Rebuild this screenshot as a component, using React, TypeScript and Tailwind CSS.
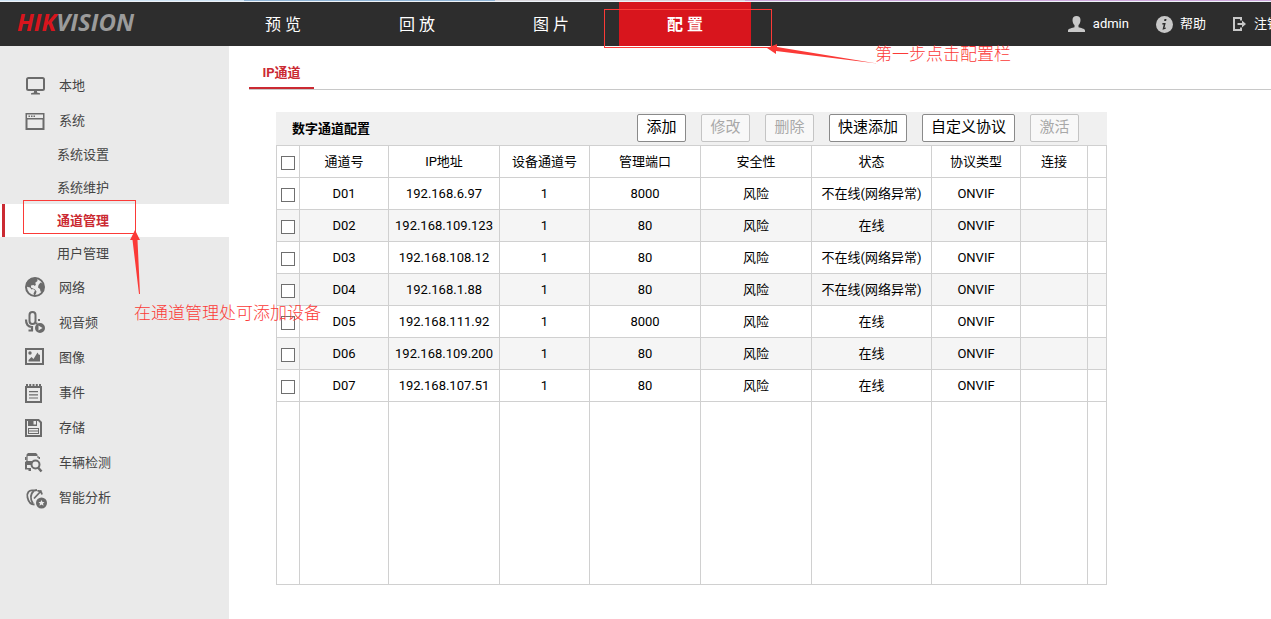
import type { ReactNode } from 'react';

type IconName =
  | 'monitor'
  | 'window'
  | 'globe'
  | 'mic'
  | 'image'
  | 'event'
  | 'storage'
  | 'vehicle'
  | 'smart';

interface MenuEntry {
  label: string;
  icon?: IconName;
  active?: boolean;
}

const MENU: MenuEntry[] = [
  { label: '本地', icon: 'monitor' },
  { label: '系统', icon: 'window' },
  { label: '系统设置' },
  { label: '系统维护' },
  { label: '通道管理', active: true },
  { label: '用户管理' },
  { label: '网络', icon: 'globe' },
  { label: '视音频', icon: 'mic' },
  { label: '图像', icon: 'image' },
  { label: '事件', icon: 'event' },
  { label: '存储', icon: 'storage' },
  { label: '车辆检测', icon: 'vehicle' },
  { label: '智能分析', icon: 'smart' },
];

const NAV = [
  { label: '预 览' },
  { label: '回 放' },
  { label: '图 片' },
  { label: '配 置', active: true },
];

const ACTIONS = [
  { label: '添加', enabled: true },
  { label: '修改', enabled: false },
  { label: '删除', enabled: false },
  { label: '快速添加', enabled: true },
  { label: '自定义协议', enabled: true },
  { label: '激活', enabled: false },
];

const COLUMNS = [
  { label: '通道号', width: 'w-[89px]' },
  { label: 'IP地址', width: 'w-[111px]' },
  { label: '设备通道号', width: 'w-[90px]' },
  { label: '管理端口', width: 'w-[111px]' },
  { label: '安全性', width: 'w-[111px]' },
  { label: '状态', width: 'w-[120px]' },
  { label: '协议类型', width: 'w-[89px]' },
  { label: '连接', width: 'w-[67px]' },
  { label: '', width: '' },
];

const OFFLINE = '不在线(网络异常)';

const CHANNELS = [
  { id: 'D01', ip: '192.168.6.97', port: '8000', state: OFFLINE },
  { id: 'D02', ip: '192.168.109.123', port: '80', state: '在线' },
  { id: 'D03', ip: '192.168.108.12', port: '80', state: OFFLINE },
  { id: 'D04', ip: '192.168.1.88', port: '80', state: OFFLINE },
  { id: 'D05', ip: '192.168.111.92', port: '8000', state: '在线' },
  { id: 'D06', ip: '192.168.109.200', port: '80', state: '在线' },
  { id: 'D07', ip: '192.168.107.51', port: '80', state: '在线' },
];

const ICONS: Record<IconName, ReactNode> = {
  monitor: (
    <>
      <rect x="3" y="4" width="17" height="12" rx="1.5" fill="none" stroke="currentColor" strokeWidth="2" />
      <path d="M10 16h3v2.5l3 .8V20.5H7V19.3l3-.8z" />
    </>
  ),
  window: (
    <>
      <path fillRule="evenodd" d="M1.5 4h19v17h-19zM3.500 10.500v8.500h15v-8.500zM3 5.500v3.500h16V5.500z" />
      <path d="M4.500 6.500H6V8H4.500zM7 6.500h1.500V8H7zM9.500 6.500H11V8H9.500z" />
    </>
  ),
  globe: (
    <>
      <circle cx="11" cy="11" r="9" fill="none" stroke="currentColor" strokeWidth="2" />
      <path d="M13 2C6 1 2 5 2 10.500l4 1 1.500 2 1.500-.5 2 1.500-1.500 3 1 2.500 1.500-2.500.5-2-1.500-2-4-2L7 9.500l2.500-.5L11 10l1-2-1-1 2.500-2zM14.500 9l2-2.500 3 1.500.5 4-1.500 4-2-.500-.5-2.500-2-1.500z" />
    </>
  ),
  mic: (
    <>
      <rect x="5.500" y="1" width="6" height="12" rx="3" fill="none" stroke="currentColor" strokeWidth="2" />
      <path d="M2 8.500c0 5 2 7.500 6 7.500M8 15v5M4.500 19.500H9" fill="none" stroke="currentColor" strokeWidth="2.200" />
      <path d="M14 8h2v2h-2zM11.500 11.500h2v2h-2z" />
      <path fillRule="evenodd" d="M16 12a5 5 0 1 1 0 10 5 5 0 0 1 0-10zM14.500 14.500v5l4-2.500z" />
    </>
  ),
  image: (
    <>
      <rect x="2" y="3" width="17" height="15" fill="none" stroke="currentColor" strokeWidth="2" />
      <circle cx="6" cy="7" r="1.700" />
      <path d="M4.500 15.500V14l3-3 2 2 4-6.500L15 9l1-.5v7z" />
    </>
  ),
  event: (
    <>
      <rect x="2" y="6" width="15" height="15" fill="none" stroke="currentColor" strokeWidth="2" />
      <path d="M2 3h2v3H2zM5.200 3h2v3h-2zM8.500 3h2v3h-2zM11.800 3h2v3h-2zM15 3h2v3h-2z" />
      <path d="M5 10h9v1.200H5zM5 13.200h9v1.200H5zM5 16.400h9v1.200H5z" />
    </>
  ),
  storage: (
    <>
      <path d="M2 4h12.500L17 6.500V20H2z" fill="none" stroke="currentColor" strokeWidth="2" />
      <path fillRule="evenodd" d="M4 4h9v6H4zM9.500 5v3.500H12V5z" />
      <rect x="4.500" y="12.500" width="10" height="5" fill="none" stroke="currentColor" />
      <path d="M5 14.500h9v1H5z" />
    </>
  ),
  vehicle: (
    <>
      <path d="M4 2h8l1.500 1.500V5H2.500V3.500zM1 6h1.500v3H1zM14.500 6H16v2h-1.500zM2.500 10h6v1.500H7V14H3v3h4v3H4.500v-1.500H1V11z" />
      <path d="M3 5v6M14 5v2" fill="none" stroke="currentColor" strokeWidth="1.200" />
      <circle cx="11.500" cy="13.500" r="4" fill="none" stroke="currentColor" strokeWidth="2" />
      <path d="M14 16.500l3.500 4" fill="none" stroke="currentColor" strokeWidth="2.500" />
    </>
  ),
  smart: (
    <>
      <path
        d="M9.500 4.500C5 3.500 2.500 7 3.500 11.500s2.500 7 7 7M10 4.500C6.500 8 6 13 9 17.500M10 12.500L17.500 4.500M8 5l5-1M13.500 5c2.500-.5 4 .5 4.500 3.500"
        fill="none"
        stroke="currentColor"
        strokeWidth="1.800"
      />
      <path
        fillRule="evenodd"
        d="M17.500 11.500a5.500 5.500 0 1 1 0 11 5.500 5.500 0 0 1 0-11zM17.500 14l-1 2h-2l1.500 1.500-.5 2.200 2-1.200 2 1.200-.5-2.200 1.500-1.500h-2z"
      />
    </>
  ),
};

function MenuIcon({ name }: { name: IconName }) {
  return (
    <svg viewBox="0 0 24 23" className="h-[23px] w-6 shrink-0 text-[#6b6b6b]" fill="currentColor" aria-hidden>
      {ICONS[name]}
    </svg>
  );
}

function Header() {
  return (
    <header className="flex h-11 shrink-0 items-stretch overflow-hidden bg-[#2d2d2d] text-white">
      <a
        href="#"
        className="flex w-[217px] shrink-0 items-center pb-1 pl-[17px] font-['Open_Sans'] text-[24px] leading-8 font-bold text-[#9b9b9b] italic"
      >
        <span className="text-[#d8151d]">HIK</span>VISION
      </a>

      <nav className="flex shrink-0 gap-0.5">
        {NAV.map((item) => (
          <a
            key={item.label}
            href="#"
            className={
              item.active
                ? 'flex w-[132px] items-center justify-center bg-[#d8151d] pt-0.5 text-base font-bold'
                : 'flex w-[132px] items-center justify-center pt-0.5 text-base'
            }
          >
            {item.label}
          </a>
        ))}
      </nav>

      <div className="-mr-[9px] ml-auto flex shrink-0 items-center gap-[27px] text-[13px]">
        <span className="flex items-center gap-2">
          <svg viewBox="0 0 17 16" className="h-4 w-[17px]" fill="#c8c8c8" aria-hidden>
            <path d="M8.500 0c2.500 0 4 1.500 4 4 0 2.200-.8 4.200-2 5v2.200c2 .8 6.500 1.300 6.500 3.300V16H0v-1.500c0-2 4.500-2.500 6.500-3.300V9c-1.200-.8-2-2.800-2-5 0-2.500 1.500-4 4-4z" />
          </svg>
          admin
        </span>
        <a href="#" className="flex items-center gap-[7px]">
          <svg viewBox="0 0 17 17" className="size-[17px]" aria-hidden>
            <circle cx="8.500" cy="8.500" r="8.500" fill="#c8c8c8" />
            <path d="M8.500 3h2l-.4 2h-2zM6.500 7h3.200l-1.200 5 1.500-.5-.3 1.200-3.200 1.100 1.200-5.300H6.200z" fill="#2d2d2d" />
          </svg>
          帮助
        </a>
        <a href="#" className="flex items-center gap-2">
          <svg viewBox="0 0 13 14" className="h-3.5 w-[13px]" aria-hidden>
            <path d="M8 3.500V1H1v12h7v-2.500" fill="none" stroke="#c8c8c8" strokeWidth="2" />
            <path d="M4.500 6H9V3.500L13 7l-4 3.500V8H4.500z" fill="#c8c8c8" />
          </svg>
          注销
        </a>
      </div>
    </header>
  );
}

function Sidebar() {
  return (
    <aside className="w-[229px] shrink-0 bg-[#eaeaea] pt-[22px] text-[13px] text-[#444]">
      <ul>
        {MENU.map((entry) => (
          <li key={entry.label}>
            {entry.icon ? (
              <a href="#" className="flex h-[35px] items-center gap-[11px] pl-6">
                <MenuIcon name={entry.icon} />
                {entry.label}
              </a>
            ) : (
              <a
                href="#"
                className={
                  entry.active
                    ? 'flex h-[33px] items-center bg-white pl-0.5 font-bold text-[#cb2a32]'
                    : 'flex h-[33px] items-center pl-[57px]'
                }
              >
                {entry.active && <span className="mr-[52px] h-full w-[3px] bg-[#cb2a32]" />}
                {entry.label}
              </a>
            )}
          </li>
        ))}
      </ul>
    </aside>
  );
}

function Tick({ label }: { label: string }) {
  return (
    <input
      type="checkbox"
      aria-label={label}
      className="mx-auto mt-[3px] block size-3.5 appearance-none border border-[#6f6f6f] bg-white"
    />
  );
}

function ChannelTable() {
  return (
    <table className="w-full table-fixed border-separate border-spacing-0 border-t border-l border-[#d0d0d0] text-center text-[13px] text-black [&_td]:border-r [&_td]:border-b [&_td]:border-[#d0d0d0] [&_td]:p-0 [&_th]:border-r [&_th]:border-b [&_th]:border-[#d0d0d0] [&_th]:p-0">
      <thead>
        <tr className="h-8">
          <th className="w-[23px]">
            <Tick label="全选" />
          </th>
          {COLUMNS.map((col) => (
            <th key={col.label} scope="col" className={`${col.width} font-normal`}>
              {col.label}
            </th>
          ))}
        </tr>
      </thead>
      <tbody>
        {CHANNELS.map((ch) => (
          <tr key={ch.id} className="h-8 even:bg-[#f5f5f5]">
            <td>
              <Tick label={ch.id} />
            </td>
            <td>{ch.id}</td>
            <td>{ch.ip}</td>
            <td>1</td>
            <td>{ch.port}</td>
            <td>风险</td>
            <td>{ch.state}</td>
            <td>ONVIF</td>
            <td />
            <td />
          </tr>
        ))}
        {/* blank space under the last channel */}
        <tr className="h-[183px]">
          <td />
          {COLUMNS.map((col) => (
            <td key={col.label} />
          ))}
        </tr>
      </tbody>
    </table>
  );
}

/** Red boxes, arrows and hints laid over the page. */
function Annotations() {
  return (
    <div className="pointer-events-none absolute inset-0 overflow-hidden text-[17px] leading-5 whitespace-nowrap text-[#fb3a37]">
      <div className="absolute top-[9px] left-[604px] h-[39px] w-[168px] border border-current" />
      <svg viewBox="0 0 112 22" className="absolute top-[43px] left-[767px] h-[22px] w-28" fill="currentColor" aria-hidden>
        <path d="M0 5L10 1v3l100 16.500L9 8v3z" />
      </svg>
      <p className="absolute top-11 left-[875px] font-light">第一步点击配置栏</p>

      <div className="absolute top-[200px] left-[23px] h-[34px] w-[113px] border border-current" />
      <svg viewBox="0 0 12 66" className="absolute top-[230px] left-[129px] h-[66px] w-3" fill="currentColor" aria-hidden>
        <path d="M6 0l5 10H8.500L11 64h-1L3.500 10H1z" />
      </svg>
      <p className="absolute top-[303px] left-[134px] font-light">在通道管理处可添加设备</p>
    </div>
  );
}

export default function App() {
  return (
    <div className="relative flex min-h-screen flex-col bg-white font-[Roboto,'Noto_Sans_CJK_SC',sans-serif]">
      <div className="flex h-0.5 shrink-0 border-b border-[#eef3f8]">
        <div className="w-[244px] bg-[#cfe4f5]" />
        <div className="w-[251px] bg-[#8fb4d6]" />
        <div className="w-[250px] bg-[#d9d6dc]" />
        <div className="flex-1 bg-[#cfa9dc]" />
      </div>
      <Header />

      <div className="flex flex-1">
        <Sidebar />
        <main className="min-w-0 flex-1 pl-5">
          <div className="flex h-11 border-b border-[#c8c8c8]">
            <a
              href="#"
              className="flex h-[43px] w-[65px] items-center justify-center border-b-2 border-[#cb2a32] pt-3 text-[13px] font-bold text-[#cb2a32]"
            >
              IP通道
            </a>
          </div>

          <section className="mt-[22px] ml-[27px] max-w-[831px]">
            <div className="flex h-[33px] items-center justify-between bg-[#f0f0f0] pr-7 pl-4">
              <h2 className="text-[13px] font-bold text-black">数字通道配置</h2>
              <div className="flex gap-[15px] pb-0.5">
                {ACTIONS.map((action) => (
                  <button
                    key={action.label}
                    type="button"
                    disabled={!action.enabled}
                    className="h-7 min-w-[49px] rounded-xs border border-[#8a8a8a] bg-white px-2 text-[15px] text-black disabled:border-[#c4c4c4] disabled:bg-[#f8f8f8] disabled:text-[#a8a8a8]"
                  >
                    {action.label}
                  </button>
                ))}
              </div>
            </div>
            <ChannelTable />
          </section>
        </main>
      </div>

      <Annotations />
    </div>
  );
}
